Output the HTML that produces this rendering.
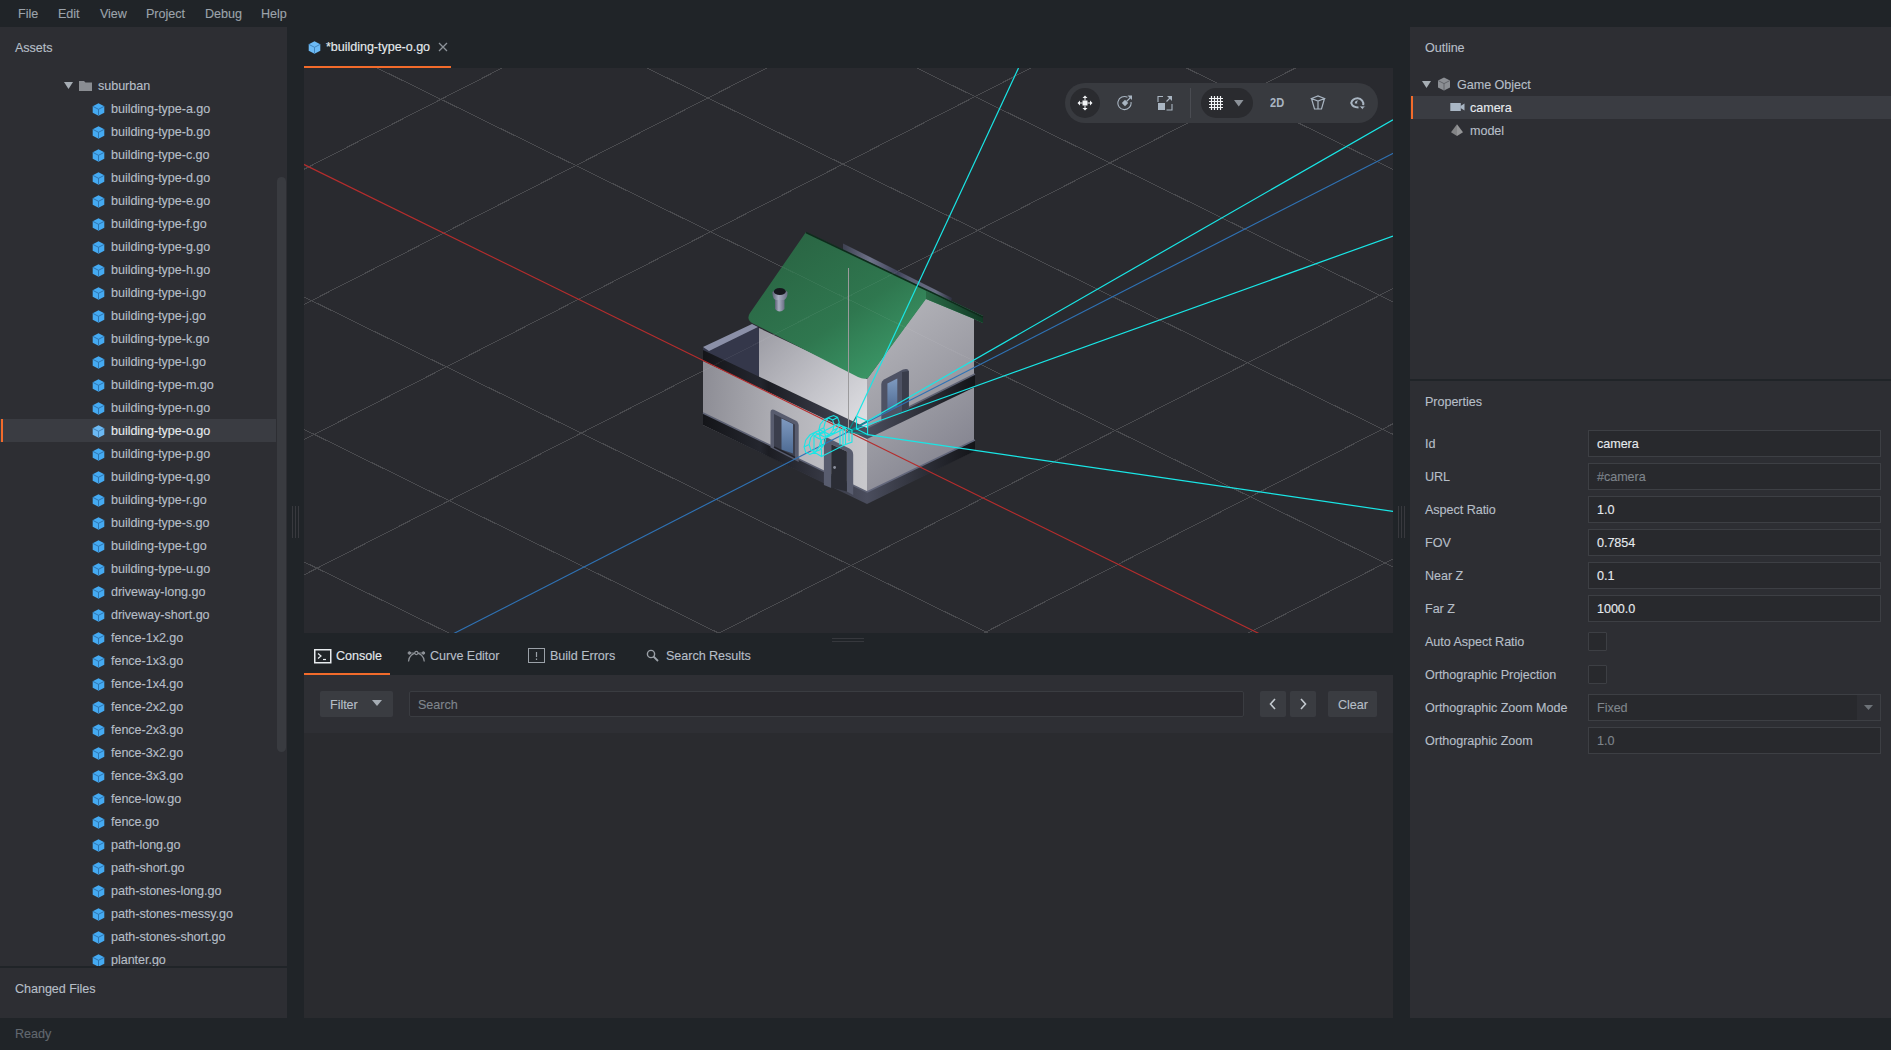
<!DOCTYPE html><html><head><meta charset="utf-8"><style>
*{box-sizing:border-box}
html,body{margin:0;padding:0;width:1891px;height:1050px;overflow:hidden;background:#202428;font-family:"Liberation Sans", sans-serif;font-size:12.6px;color:#b6bec7}
.a{position:absolute}
.t{position:absolute;white-space:nowrap;line-height:16px;letter-spacing:-0.05px;margin-top:1px;-webkit-text-stroke:0.12px currentColor}
</style></head><body>
<div class="t" style="left:18px;top:5px;color:#9ca3ab">File</div>
<div class="t" style="left:58px;top:5px;color:#9ca3ab">Edit</div>
<div class="t" style="left:100px;top:5px;color:#9ca3ab">View</div>
<div class="t" style="left:146px;top:5px;color:#9ca3ab">Project</div>
<div class="t" style="left:205px;top:5px;color:#9ca3ab">Debug</div>
<div class="t" style="left:261px;top:5px;color:#9ca3ab">Help</div>
<div class="a" style="left:0;top:27px;width:287px;height:939px;background:#2d2e33"></div>
<div class="a" style="left:0;top:968px;width:287px;height:50px;background:#2d2e33"></div>
<div class="t" style="left:15px;top:39px">Assets</div>
<svg class="a" style="left:64px;top:81.5px" width="10" height="8"><path d="M0 0 L9 0 L4.5 7Z" fill="#a6adb4"/></svg>
<svg class="a" style="left:79px;top:80px" width="14" height="12"><path d="M0 1 L5 1 L6.5 2.5 L13 2.5 L13 11 L0 11Z" fill="#8a8d92"/></svg>
<div class="t" style="left:98px;top:77px">suburban</div>
<div class="a" style="left:0;top:0;width:287px;height:966px;overflow:hidden">
<svg style="position:absolute;left:92px;top:103px" width="13" height="13" viewBox="0 0 13 13"><path d="M6.5 0.3 L12.3 3.3 L12.3 9.7 L6.5 12.7 L0.7 9.7 L0.7 3.3 Z" fill="#45aaf2"/><path d="M0.9 3.4 L6.5 6.3 L12.1 3.4 M6.5 6.3 L6.5 12.5" stroke="#2b6fa8" stroke-width="0.9" fill="none"/></svg>
<div class="t" style="left:111px;top:100px">building-type-a.go</div>
<svg style="position:absolute;left:92px;top:126px" width="13" height="13" viewBox="0 0 13 13"><path d="M6.5 0.3 L12.3 3.3 L12.3 9.7 L6.5 12.7 L0.7 9.7 L0.7 3.3 Z" fill="#45aaf2"/><path d="M0.9 3.4 L6.5 6.3 L12.1 3.4 M6.5 6.3 L6.5 12.5" stroke="#2b6fa8" stroke-width="0.9" fill="none"/></svg>
<div class="t" style="left:111px;top:123px">building-type-b.go</div>
<svg style="position:absolute;left:92px;top:149px" width="13" height="13" viewBox="0 0 13 13"><path d="M6.5 0.3 L12.3 3.3 L12.3 9.7 L6.5 12.7 L0.7 9.7 L0.7 3.3 Z" fill="#45aaf2"/><path d="M0.9 3.4 L6.5 6.3 L12.1 3.4 M6.5 6.3 L6.5 12.5" stroke="#2b6fa8" stroke-width="0.9" fill="none"/></svg>
<div class="t" style="left:111px;top:146px">building-type-c.go</div>
<svg style="position:absolute;left:92px;top:172px" width="13" height="13" viewBox="0 0 13 13"><path d="M6.5 0.3 L12.3 3.3 L12.3 9.7 L6.5 12.7 L0.7 9.7 L0.7 3.3 Z" fill="#45aaf2"/><path d="M0.9 3.4 L6.5 6.3 L12.1 3.4 M6.5 6.3 L6.5 12.5" stroke="#2b6fa8" stroke-width="0.9" fill="none"/></svg>
<div class="t" style="left:111px;top:169px">building-type-d.go</div>
<svg style="position:absolute;left:92px;top:195px" width="13" height="13" viewBox="0 0 13 13"><path d="M6.5 0.3 L12.3 3.3 L12.3 9.7 L6.5 12.7 L0.7 9.7 L0.7 3.3 Z" fill="#45aaf2"/><path d="M0.9 3.4 L6.5 6.3 L12.1 3.4 M6.5 6.3 L6.5 12.5" stroke="#2b6fa8" stroke-width="0.9" fill="none"/></svg>
<div class="t" style="left:111px;top:192px">building-type-e.go</div>
<svg style="position:absolute;left:92px;top:218px" width="13" height="13" viewBox="0 0 13 13"><path d="M6.5 0.3 L12.3 3.3 L12.3 9.7 L6.5 12.7 L0.7 9.7 L0.7 3.3 Z" fill="#45aaf2"/><path d="M0.9 3.4 L6.5 6.3 L12.1 3.4 M6.5 6.3 L6.5 12.5" stroke="#2b6fa8" stroke-width="0.9" fill="none"/></svg>
<div class="t" style="left:111px;top:215px">building-type-f.go</div>
<svg style="position:absolute;left:92px;top:241px" width="13" height="13" viewBox="0 0 13 13"><path d="M6.5 0.3 L12.3 3.3 L12.3 9.7 L6.5 12.7 L0.7 9.7 L0.7 3.3 Z" fill="#45aaf2"/><path d="M0.9 3.4 L6.5 6.3 L12.1 3.4 M6.5 6.3 L6.5 12.5" stroke="#2b6fa8" stroke-width="0.9" fill="none"/></svg>
<div class="t" style="left:111px;top:238px">building-type-g.go</div>
<svg style="position:absolute;left:92px;top:264px" width="13" height="13" viewBox="0 0 13 13"><path d="M6.5 0.3 L12.3 3.3 L12.3 9.7 L6.5 12.7 L0.7 9.7 L0.7 3.3 Z" fill="#45aaf2"/><path d="M0.9 3.4 L6.5 6.3 L12.1 3.4 M6.5 6.3 L6.5 12.5" stroke="#2b6fa8" stroke-width="0.9" fill="none"/></svg>
<div class="t" style="left:111px;top:261px">building-type-h.go</div>
<svg style="position:absolute;left:92px;top:287px" width="13" height="13" viewBox="0 0 13 13"><path d="M6.5 0.3 L12.3 3.3 L12.3 9.7 L6.5 12.7 L0.7 9.7 L0.7 3.3 Z" fill="#45aaf2"/><path d="M0.9 3.4 L6.5 6.3 L12.1 3.4 M6.5 6.3 L6.5 12.5" stroke="#2b6fa8" stroke-width="0.9" fill="none"/></svg>
<div class="t" style="left:111px;top:284px">building-type-i.go</div>
<svg style="position:absolute;left:92px;top:310px" width="13" height="13" viewBox="0 0 13 13"><path d="M6.5 0.3 L12.3 3.3 L12.3 9.7 L6.5 12.7 L0.7 9.7 L0.7 3.3 Z" fill="#45aaf2"/><path d="M0.9 3.4 L6.5 6.3 L12.1 3.4 M6.5 6.3 L6.5 12.5" stroke="#2b6fa8" stroke-width="0.9" fill="none"/></svg>
<div class="t" style="left:111px;top:307px">building-type-j.go</div>
<svg style="position:absolute;left:92px;top:333px" width="13" height="13" viewBox="0 0 13 13"><path d="M6.5 0.3 L12.3 3.3 L12.3 9.7 L6.5 12.7 L0.7 9.7 L0.7 3.3 Z" fill="#45aaf2"/><path d="M0.9 3.4 L6.5 6.3 L12.1 3.4 M6.5 6.3 L6.5 12.5" stroke="#2b6fa8" stroke-width="0.9" fill="none"/></svg>
<div class="t" style="left:111px;top:330px">building-type-k.go</div>
<svg style="position:absolute;left:92px;top:356px" width="13" height="13" viewBox="0 0 13 13"><path d="M6.5 0.3 L12.3 3.3 L12.3 9.7 L6.5 12.7 L0.7 9.7 L0.7 3.3 Z" fill="#45aaf2"/><path d="M0.9 3.4 L6.5 6.3 L12.1 3.4 M6.5 6.3 L6.5 12.5" stroke="#2b6fa8" stroke-width="0.9" fill="none"/></svg>
<div class="t" style="left:111px;top:353px">building-type-l.go</div>
<svg style="position:absolute;left:92px;top:379px" width="13" height="13" viewBox="0 0 13 13"><path d="M6.5 0.3 L12.3 3.3 L12.3 9.7 L6.5 12.7 L0.7 9.7 L0.7 3.3 Z" fill="#45aaf2"/><path d="M0.9 3.4 L6.5 6.3 L12.1 3.4 M6.5 6.3 L6.5 12.5" stroke="#2b6fa8" stroke-width="0.9" fill="none"/></svg>
<div class="t" style="left:111px;top:376px">building-type-m.go</div>
<svg style="position:absolute;left:92px;top:402px" width="13" height="13" viewBox="0 0 13 13"><path d="M6.5 0.3 L12.3 3.3 L12.3 9.7 L6.5 12.7 L0.7 9.7 L0.7 3.3 Z" fill="#45aaf2"/><path d="M0.9 3.4 L6.5 6.3 L12.1 3.4 M6.5 6.3 L6.5 12.5" stroke="#2b6fa8" stroke-width="0.9" fill="none"/></svg>
<div class="t" style="left:111px;top:399px">building-type-n.go</div>
<div class="a" style="left:0;top:419px;width:276px;height:23px;background:#3a3c42"></div>
<div class="a" style="left:1px;top:419px;width:2px;height:23px;background:#f26b2b"></div>
<svg style="position:absolute;left:92px;top:425px" width="13" height="13" viewBox="0 0 13 13"><path d="M6.5 0.3 L12.3 3.3 L12.3 9.7 L6.5 12.7 L0.7 9.7 L0.7 3.3 Z" fill="#6cbaf5"/><path d="M0.9 3.4 L6.5 6.3 L12.1 3.4 M6.5 6.3 L6.5 12.5" stroke="#3d80b8" stroke-width="0.9" fill="none"/></svg>
<div class="t" style="left:111px;top:422px;color:#e6eaee">building-type-o.go</div>
<svg style="position:absolute;left:92px;top:448px" width="13" height="13" viewBox="0 0 13 13"><path d="M6.5 0.3 L12.3 3.3 L12.3 9.7 L6.5 12.7 L0.7 9.7 L0.7 3.3 Z" fill="#45aaf2"/><path d="M0.9 3.4 L6.5 6.3 L12.1 3.4 M6.5 6.3 L6.5 12.5" stroke="#2b6fa8" stroke-width="0.9" fill="none"/></svg>
<div class="t" style="left:111px;top:445px">building-type-p.go</div>
<svg style="position:absolute;left:92px;top:471px" width="13" height="13" viewBox="0 0 13 13"><path d="M6.5 0.3 L12.3 3.3 L12.3 9.7 L6.5 12.7 L0.7 9.7 L0.7 3.3 Z" fill="#45aaf2"/><path d="M0.9 3.4 L6.5 6.3 L12.1 3.4 M6.5 6.3 L6.5 12.5" stroke="#2b6fa8" stroke-width="0.9" fill="none"/></svg>
<div class="t" style="left:111px;top:468px">building-type-q.go</div>
<svg style="position:absolute;left:92px;top:494px" width="13" height="13" viewBox="0 0 13 13"><path d="M6.5 0.3 L12.3 3.3 L12.3 9.7 L6.5 12.7 L0.7 9.7 L0.7 3.3 Z" fill="#45aaf2"/><path d="M0.9 3.4 L6.5 6.3 L12.1 3.4 M6.5 6.3 L6.5 12.5" stroke="#2b6fa8" stroke-width="0.9" fill="none"/></svg>
<div class="t" style="left:111px;top:491px">building-type-r.go</div>
<svg style="position:absolute;left:92px;top:517px" width="13" height="13" viewBox="0 0 13 13"><path d="M6.5 0.3 L12.3 3.3 L12.3 9.7 L6.5 12.7 L0.7 9.7 L0.7 3.3 Z" fill="#45aaf2"/><path d="M0.9 3.4 L6.5 6.3 L12.1 3.4 M6.5 6.3 L6.5 12.5" stroke="#2b6fa8" stroke-width="0.9" fill="none"/></svg>
<div class="t" style="left:111px;top:514px">building-type-s.go</div>
<svg style="position:absolute;left:92px;top:540px" width="13" height="13" viewBox="0 0 13 13"><path d="M6.5 0.3 L12.3 3.3 L12.3 9.7 L6.5 12.7 L0.7 9.7 L0.7 3.3 Z" fill="#45aaf2"/><path d="M0.9 3.4 L6.5 6.3 L12.1 3.4 M6.5 6.3 L6.5 12.5" stroke="#2b6fa8" stroke-width="0.9" fill="none"/></svg>
<div class="t" style="left:111px;top:537px">building-type-t.go</div>
<svg style="position:absolute;left:92px;top:563px" width="13" height="13" viewBox="0 0 13 13"><path d="M6.5 0.3 L12.3 3.3 L12.3 9.7 L6.5 12.7 L0.7 9.7 L0.7 3.3 Z" fill="#45aaf2"/><path d="M0.9 3.4 L6.5 6.3 L12.1 3.4 M6.5 6.3 L6.5 12.5" stroke="#2b6fa8" stroke-width="0.9" fill="none"/></svg>
<div class="t" style="left:111px;top:560px">building-type-u.go</div>
<svg style="position:absolute;left:92px;top:586px" width="13" height="13" viewBox="0 0 13 13"><path d="M6.5 0.3 L12.3 3.3 L12.3 9.7 L6.5 12.7 L0.7 9.7 L0.7 3.3 Z" fill="#45aaf2"/><path d="M0.9 3.4 L6.5 6.3 L12.1 3.4 M6.5 6.3 L6.5 12.5" stroke="#2b6fa8" stroke-width="0.9" fill="none"/></svg>
<div class="t" style="left:111px;top:583px">driveway-long.go</div>
<svg style="position:absolute;left:92px;top:609px" width="13" height="13" viewBox="0 0 13 13"><path d="M6.5 0.3 L12.3 3.3 L12.3 9.7 L6.5 12.7 L0.7 9.7 L0.7 3.3 Z" fill="#45aaf2"/><path d="M0.9 3.4 L6.5 6.3 L12.1 3.4 M6.5 6.3 L6.5 12.5" stroke="#2b6fa8" stroke-width="0.9" fill="none"/></svg>
<div class="t" style="left:111px;top:606px">driveway-short.go</div>
<svg style="position:absolute;left:92px;top:632px" width="13" height="13" viewBox="0 0 13 13"><path d="M6.5 0.3 L12.3 3.3 L12.3 9.7 L6.5 12.7 L0.7 9.7 L0.7 3.3 Z" fill="#45aaf2"/><path d="M0.9 3.4 L6.5 6.3 L12.1 3.4 M6.5 6.3 L6.5 12.5" stroke="#2b6fa8" stroke-width="0.9" fill="none"/></svg>
<div class="t" style="left:111px;top:629px">fence-1x2.go</div>
<svg style="position:absolute;left:92px;top:655px" width="13" height="13" viewBox="0 0 13 13"><path d="M6.5 0.3 L12.3 3.3 L12.3 9.7 L6.5 12.7 L0.7 9.7 L0.7 3.3 Z" fill="#45aaf2"/><path d="M0.9 3.4 L6.5 6.3 L12.1 3.4 M6.5 6.3 L6.5 12.5" stroke="#2b6fa8" stroke-width="0.9" fill="none"/></svg>
<div class="t" style="left:111px;top:652px">fence-1x3.go</div>
<svg style="position:absolute;left:92px;top:678px" width="13" height="13" viewBox="0 0 13 13"><path d="M6.5 0.3 L12.3 3.3 L12.3 9.7 L6.5 12.7 L0.7 9.7 L0.7 3.3 Z" fill="#45aaf2"/><path d="M0.9 3.4 L6.5 6.3 L12.1 3.4 M6.5 6.3 L6.5 12.5" stroke="#2b6fa8" stroke-width="0.9" fill="none"/></svg>
<div class="t" style="left:111px;top:675px">fence-1x4.go</div>
<svg style="position:absolute;left:92px;top:701px" width="13" height="13" viewBox="0 0 13 13"><path d="M6.5 0.3 L12.3 3.3 L12.3 9.7 L6.5 12.7 L0.7 9.7 L0.7 3.3 Z" fill="#45aaf2"/><path d="M0.9 3.4 L6.5 6.3 L12.1 3.4 M6.5 6.3 L6.5 12.5" stroke="#2b6fa8" stroke-width="0.9" fill="none"/></svg>
<div class="t" style="left:111px;top:698px">fence-2x2.go</div>
<svg style="position:absolute;left:92px;top:724px" width="13" height="13" viewBox="0 0 13 13"><path d="M6.5 0.3 L12.3 3.3 L12.3 9.7 L6.5 12.7 L0.7 9.7 L0.7 3.3 Z" fill="#45aaf2"/><path d="M0.9 3.4 L6.5 6.3 L12.1 3.4 M6.5 6.3 L6.5 12.5" stroke="#2b6fa8" stroke-width="0.9" fill="none"/></svg>
<div class="t" style="left:111px;top:721px">fence-2x3.go</div>
<svg style="position:absolute;left:92px;top:747px" width="13" height="13" viewBox="0 0 13 13"><path d="M6.5 0.3 L12.3 3.3 L12.3 9.7 L6.5 12.7 L0.7 9.7 L0.7 3.3 Z" fill="#45aaf2"/><path d="M0.9 3.4 L6.5 6.3 L12.1 3.4 M6.5 6.3 L6.5 12.5" stroke="#2b6fa8" stroke-width="0.9" fill="none"/></svg>
<div class="t" style="left:111px;top:744px">fence-3x2.go</div>
<svg style="position:absolute;left:92px;top:770px" width="13" height="13" viewBox="0 0 13 13"><path d="M6.5 0.3 L12.3 3.3 L12.3 9.7 L6.5 12.7 L0.7 9.7 L0.7 3.3 Z" fill="#45aaf2"/><path d="M0.9 3.4 L6.5 6.3 L12.1 3.4 M6.5 6.3 L6.5 12.5" stroke="#2b6fa8" stroke-width="0.9" fill="none"/></svg>
<div class="t" style="left:111px;top:767px">fence-3x3.go</div>
<svg style="position:absolute;left:92px;top:793px" width="13" height="13" viewBox="0 0 13 13"><path d="M6.5 0.3 L12.3 3.3 L12.3 9.7 L6.5 12.7 L0.7 9.7 L0.7 3.3 Z" fill="#45aaf2"/><path d="M0.9 3.4 L6.5 6.3 L12.1 3.4 M6.5 6.3 L6.5 12.5" stroke="#2b6fa8" stroke-width="0.9" fill="none"/></svg>
<div class="t" style="left:111px;top:790px">fence-low.go</div>
<svg style="position:absolute;left:92px;top:816px" width="13" height="13" viewBox="0 0 13 13"><path d="M6.5 0.3 L12.3 3.3 L12.3 9.7 L6.5 12.7 L0.7 9.7 L0.7 3.3 Z" fill="#45aaf2"/><path d="M0.9 3.4 L6.5 6.3 L12.1 3.4 M6.5 6.3 L6.5 12.5" stroke="#2b6fa8" stroke-width="0.9" fill="none"/></svg>
<div class="t" style="left:111px;top:813px">fence.go</div>
<svg style="position:absolute;left:92px;top:839px" width="13" height="13" viewBox="0 0 13 13"><path d="M6.5 0.3 L12.3 3.3 L12.3 9.7 L6.5 12.7 L0.7 9.7 L0.7 3.3 Z" fill="#45aaf2"/><path d="M0.9 3.4 L6.5 6.3 L12.1 3.4 M6.5 6.3 L6.5 12.5" stroke="#2b6fa8" stroke-width="0.9" fill="none"/></svg>
<div class="t" style="left:111px;top:836px">path-long.go</div>
<svg style="position:absolute;left:92px;top:862px" width="13" height="13" viewBox="0 0 13 13"><path d="M6.5 0.3 L12.3 3.3 L12.3 9.7 L6.5 12.7 L0.7 9.7 L0.7 3.3 Z" fill="#45aaf2"/><path d="M0.9 3.4 L6.5 6.3 L12.1 3.4 M6.5 6.3 L6.5 12.5" stroke="#2b6fa8" stroke-width="0.9" fill="none"/></svg>
<div class="t" style="left:111px;top:859px">path-short.go</div>
<svg style="position:absolute;left:92px;top:885px" width="13" height="13" viewBox="0 0 13 13"><path d="M6.5 0.3 L12.3 3.3 L12.3 9.7 L6.5 12.7 L0.7 9.7 L0.7 3.3 Z" fill="#45aaf2"/><path d="M0.9 3.4 L6.5 6.3 L12.1 3.4 M6.5 6.3 L6.5 12.5" stroke="#2b6fa8" stroke-width="0.9" fill="none"/></svg>
<div class="t" style="left:111px;top:882px">path-stones-long.go</div>
<svg style="position:absolute;left:92px;top:908px" width="13" height="13" viewBox="0 0 13 13"><path d="M6.5 0.3 L12.3 3.3 L12.3 9.7 L6.5 12.7 L0.7 9.7 L0.7 3.3 Z" fill="#45aaf2"/><path d="M0.9 3.4 L6.5 6.3 L12.1 3.4 M6.5 6.3 L6.5 12.5" stroke="#2b6fa8" stroke-width="0.9" fill="none"/></svg>
<div class="t" style="left:111px;top:905px">path-stones-messy.go</div>
<svg style="position:absolute;left:92px;top:931px" width="13" height="13" viewBox="0 0 13 13"><path d="M6.5 0.3 L12.3 3.3 L12.3 9.7 L6.5 12.7 L0.7 9.7 L0.7 3.3 Z" fill="#45aaf2"/><path d="M0.9 3.4 L6.5 6.3 L12.1 3.4 M6.5 6.3 L6.5 12.5" stroke="#2b6fa8" stroke-width="0.9" fill="none"/></svg>
<div class="t" style="left:111px;top:928px">path-stones-short.go</div>
<svg style="position:absolute;left:92px;top:954px" width="13" height="13" viewBox="0 0 13 13"><path d="M6.5 0.3 L12.3 3.3 L12.3 9.7 L6.5 12.7 L0.7 9.7 L0.7 3.3 Z" fill="#45aaf2"/><path d="M0.9 3.4 L6.5 6.3 L12.1 3.4 M6.5 6.3 L6.5 12.5" stroke="#2b6fa8" stroke-width="0.9" fill="none"/></svg>
<div class="t" style="left:111px;top:951px">planter.go</div>
</div>
<div class="a" style="left:277px;top:177px;width:9px;height:575px;border-radius:4.5px;background:#393b40"></div>
<div class="t" style="left:15px;top:980px">Changed Files</div>
<div class="t" style="left:15px;top:1025px;color:#62686f">Ready</div>
<div class="a" style="left:292px;top:506px;width:1px;height:32px;background:#38393e"></div>
<div class="a" style="left:295px;top:506px;width:1px;height:32px;background:#38393e"></div>
<div class="a" style="left:298px;top:506px;width:1px;height:32px;background:#38393e"></div>
<div class="a" style="left:1398px;top:506px;width:1px;height:32px;background:#38393e"></div>
<div class="a" style="left:1401px;top:506px;width:1px;height:32px;background:#38393e"></div>
<div class="a" style="left:1404px;top:506px;width:1px;height:32px;background:#38393e"></div>
<svg style="position:absolute;left:308px;top:41px" width="13" height="13" viewBox="0 0 13 13"><path d="M6.5 0.3 L12.3 3.3 L12.3 9.7 L6.5 12.7 L0.7 9.7 L0.7 3.3 Z" fill="#6cbaf5"/><path d="M0.9 3.4 L6.5 6.3 L12.1 3.4 M6.5 6.3 L6.5 12.5" stroke="#3d80b8" stroke-width="0.9" fill="none"/></svg>
<div class="t" style="left:326px;top:38px;color:#e6eaee">*building-type-o.go</div>
<svg class="a" style="left:438px;top:42px" width="10" height="10"><path d="M1 1 L9 9 M9 1 L1 9" stroke="#8d939a" stroke-width="1.3"/></svg>
<div class="a" style="left:304px;top:66px;width:147px;height:2px;background:#f26b2b"></div>
<div class="a" style="left:304px;top:68px;width:1089px;height:565px;background:#292a2f;overflow:hidden">
<svg width="1089" height="565" viewBox="304 68 1089 565" style="position:absolute;left:0;top:0"><path d="M-2354.9 447.6L815.6 -1172.8M-2354.9 447.6L881.0 2038.9M-2220.2 513.9L950.4 -1106.7M-2222.7 380.1L1013.3 1971.2M-2085.5 580.1L1085.2 -1040.6M-2090.6 312.6L1145.5 1903.6M-1950.8 646.3L1220.0 -974.4M-1958.5 245.0L1277.8 1835.9M-1816.1 712.6L1354.8 -908.3M-1826.3 177.5L1410.0 1768.3M-1681.4 778.8L1489.7 -842.2M-1694.2 110.0L1542.3 1700.7M-1546.6 845.1L1624.5 -776.0M-1562.1 42.4L1674.5 1633.0M-1411.9 911.3L1759.4 -709.8M-1430.0 -25.1L1806.8 1565.4M-1277.1 977.6L1894.3 -643.7M-1297.8 -92.6L1939.0 1497.8M-1142.3 1043.9L2029.2 -577.5M-1165.7 -160.2L2071.2 1430.1M-1007.5 1110.2L2164.1 -511.3M-1033.6 -227.7L2203.5 1362.5M-872.7 1176.5L2299.0 -445.1M-901.5 -295.2L2335.7 1294.9M-603.1 1309.1L2568.9 -312.7M-637.3 -430.2L2600.2 1159.7M-468.2 1375.4L2703.9 -246.5M-505.2 -497.8L2732.4 1092.0M-333.4 1441.7L2838.9 -180.3M-373.1 -565.3L2864.6 1024.4M-198.5 1508.0L2973.9 -114.1M-241.0 -632.8L2996.8 956.8M-63.6 1574.3L3108.9 -47.8M-108.9 -700.3L3129.0 889.2M71.3 1640.7L3243.9 18.4M23.1 -767.8L3261.2 821.6M206.2 1707.0L3379.0 84.6M155.2 -835.3L3393.4 754.0M341.2 1773.4L3514.0 150.9M287.3 -902.8L3525.6 686.4M476.1 1839.7L3649.1 217.1M419.4 -970.3L3657.8 618.8M611.1 1906.1L3784.2 283.4M551.4 -1037.8L3790.0 551.1M746.0 1972.5L3919.3 349.7M683.5 -1105.3L3922.2 483.5M881.0 2038.9L4054.4 415.9M815.6 -1172.8L4054.4 415.9" stroke="#ffffff" stroke-opacity="0.11" stroke-width="1" fill="none" shape-rendering="crispEdges"/><defs>
<linearGradient id="gRoof" x1="806" y1="233" x2="900" y2="370" gradientUnits="userSpaceOnUse"><stop offset="0" stop-color="#2a6644"/><stop offset="0.55" stop-color="#2f774f"/><stop offset="1" stop-color="#3c9a69"/></linearGradient>
<linearGradient id="gLeftG" x1="703" y1="420" x2="867" y2="430" gradientUnits="userSpaceOnUse"><stop offset="0" stop-color="#8e8e96"/><stop offset="0.5" stop-color="#b2b2b8"/><stop offset="1" stop-color="#c8c8cc"/></linearGradient>
<linearGradient id="gLeftU" x1="760" y1="330" x2="860" y2="425" gradientUnits="userSpaceOnUse"><stop offset="0" stop-color="#9c9ca4"/><stop offset="0.6" stop-color="#c4c4ca"/><stop offset="1" stop-color="#dedee2"/></linearGradient>
<linearGradient id="gRight" x1="870" y1="330" x2="975" y2="460" gradientUnits="userSpaceOnUse"><stop offset="0" stop-color="#b2b2b8"/><stop offset="0.5" stop-color="#9c9ca4"/><stop offset="1" stop-color="#82828e"/></linearGradient>
<linearGradient id="gBand" x1="703" y1="0" x2="975" y2="0" gradientUnits="userSpaceOnUse"><stop offset="0" stop-color="#17181d"/><stop offset="0.3" stop-color="#2a2c35"/><stop offset="0.6" stop-color="#41445280"/><stop offset="1" stop-color="#1c1d24"/></linearGradient>
<linearGradient id="gGlass" x1="0" y1="0" x2="0" y2="1"><stop offset="0" stop-color="#7f9ac0"/><stop offset="1" stop-color="#4d6a92"/></linearGradient>
</defs><polygon points="703,351 867,429 867,503 703,425" fill="url(#gLeftG)"/><polygon points="703,348 752,325 759,328 759,378 703,351" fill="#34374a"/><polygon points="703,347 752,324 758,327 709,351" fill="#8b90a8"/><polygon points="759,328 867,379 867,430 759,378" fill="url(#gLeftU)"/><polygon points="867,379 926,298 974,318 974,451 867,503" fill="url(#gRight)"/><linearGradient id="gBandL" x1="703" y1="0" x2="867" y2="0" gradientUnits="userSpaceOnUse"><stop offset="0" stop-color="#141519"/><stop offset="0.35" stop-color="#24262e"/><stop offset="0.4" stop-color="#1c1d23"/><stop offset="1" stop-color="#4a4d5d"/></linearGradient><linearGradient id="gBandR" x1="867" y1="0" x2="975" y2="0" gradientUnits="userSpaceOnUse"><stop offset="0" stop-color="#4a4d5d"/><stop offset="0.5" stop-color="#2e3039"/><stop offset="1" stop-color="#131418"/></linearGradient><polygon points="703,350 867,428 867,439 703,361" fill="url(#gBandL)"/><polygon points="867,428 975,374 975,387 867,439" fill="url(#gBandR)"/><polyline points="867,428 975,374" stroke="#5e6274" stroke-width="1.5" fill="none"/><polygon points="703,413 867,492 867,504 703,425" fill="url(#gBandL)"/><polyline points="703,413 867,492" stroke="#5e6274" stroke-width="1.5" fill="none"/><polygon points="867,492 975,440 975,451 867,504" fill="url(#gBandR)"/><polyline points="867,492 975,440" stroke="#62667a" stroke-width="1.5" fill="none"/><path d="M770.5,447.4 L770.5,412 Q770.5,408.5 774,409.8 L795,420.3 Q798.7,422.3 798.7,425.5 L798.7,462 Z" fill="#585c6e"/><path d="M774,446.5 L774,414 L795,424.5 L795,458 Z" fill="#3b3e4c"/><path d="M781.5,449.5 L781.5,418.6 L793,424 L793,453.6 Z" fill="url(#gGlass)"/><path d="M774,447 L795,457.5" stroke="#22232a" stroke-width="1.5"/><path d="M823.9,485 L823.9,440.5 Q824,436.5 828,438 L849.5,448.5 Q853.2,450.5 853.2,454.5 L853.2,495 L846.9,491.5 L846.9,451.5 L831.2,444.2 L831.2,488 Z" fill="#585c6e"/><path d="M831.2,444.2 L846.9,451.5 L846.9,491.5 L831.2,487.5 Z" fill="#2b2d35"/><circle cx="834.6" cy="467.5" r="1.4" fill="#8c909e"/><path d="M881.3,421.8 L881.3,384 Q881.3,381 884,379.5 L903,369.5 Q908.8,367.5 908.8,372 L908.8,408 Z" fill="#4e5264"/><path d="M902,372 L908.8,371 L908.8,408 L902,411.5 Z" fill="#3a3d4b"/><path d="M887.4,411 L887.4,383.5 L897.3,378.5 L897.3,406.2 Z" fill="url(#gGlass)"/><linearGradient id="gStrip" x1="843" y1="0" x2="952" y2="0" gradientUnits="userSpaceOnUse"><stop offset="0" stop-color="#3e4152"/><stop offset="0.25" stop-color="#6e7288"/><stop offset="0.5" stop-color="#40435a"/><stop offset="0.62" stop-color="#5a5e74"/><stop offset="0.85" stop-color="#6a6e84"/><stop offset="1" stop-color="#2e3040"/></linearGradient><polygon points="843,243.5 952,298 951,302 843,251" fill="url(#gStrip)"/><path d="M806,232 L983,316 L983,323 L973,318.5 L926,299 L868,378 Q864,380 858,377 L752,323 Q746,319 750,313 Z" fill="url(#gRoof)"/><linearGradient id="gOver" x1="926" y1="0" x2="983" y2="0" gradientUnits="userSpaceOnUse"><stop offset="0" stop-color="#2a6a46"/><stop offset="1" stop-color="#123a26"/></linearGradient><polygon points="926,291 983,317 983,323 973,318.5 926,299" fill="url(#gOver)"/><polyline points="806,232.5 983,317" stroke="#0f2a1c" stroke-width="1.6" fill="none"/><linearGradient id="gChim" x1="0" y1="0" x2="1" y2="0"><stop offset="0" stop-color="#5d6276"/><stop offset="0.4" stop-color="#a8adc0"/><stop offset="1" stop-color="#6a6f84"/></linearGradient><path d="M775,298 L775,309 Q779.5,314 784.5,309 L784.5,298 Z" fill="url(#gChim)"/><path d="M772.3,292 Q772.5,299 776,300 L784,300 Q787.8,298 787.5,292 Q780,285 772.3,292Z" fill="url(#gChim)"/><ellipse cx="779.8" cy="291.5" rx="6" ry="3.6" fill="#16171d"/><path d="M-2354.9 447.6L815.6 -1172.8M-2354.9 447.6L881.0 2038.9M-2220.2 513.9L950.4 -1106.7M-2222.7 380.1L1013.3 1971.2M-2085.5 580.1L1085.2 -1040.6M-2090.6 312.6L1145.5 1903.6M-1950.8 646.3L1220.0 -974.4M-1958.5 245.0L1277.8 1835.9M-1816.1 712.6L1354.8 -908.3M-1826.3 177.5L1410.0 1768.3M-1681.4 778.8L1489.7 -842.2M-1694.2 110.0L1542.3 1700.7M-1546.6 845.1L1624.5 -776.0M-1562.1 42.4L1674.5 1633.0M-1411.9 911.3L1759.4 -709.8M-1430.0 -25.1L1806.8 1565.4M-1277.1 977.6L1894.3 -643.7M-1297.8 -92.6L1939.0 1497.8M-1142.3 1043.9L2029.2 -577.5M-1165.7 -160.2L2071.2 1430.1M-1007.5 1110.2L2164.1 -511.3M-1033.6 -227.7L2203.5 1362.5M-872.7 1176.5L2299.0 -445.1M-901.5 -295.2L2335.7 1294.9M-603.1 1309.1L2568.9 -312.7M-637.3 -430.2L2600.2 1159.7M-468.2 1375.4L2703.9 -246.5M-505.2 -497.8L2732.4 1092.0M-333.4 1441.7L2838.9 -180.3M-373.1 -565.3L2864.6 1024.4M-198.5 1508.0L2973.9 -114.1M-241.0 -632.8L2996.8 956.8M-63.6 1574.3L3108.9 -47.8M-108.9 -700.3L3129.0 889.2M71.3 1640.7L3243.9 18.4M23.1 -767.8L3261.2 821.6M206.2 1707.0L3379.0 84.6M155.2 -835.3L3393.4 754.0M341.2 1773.4L3514.0 150.9M287.3 -902.8L3525.6 686.4M476.1 1839.7L3649.1 217.1M419.4 -970.3L3657.8 618.8M611.1 1906.1L3784.2 283.4M551.4 -1037.8L3790.0 551.1M746.0 1972.5L3919.3 349.7M683.5 -1105.3L3922.2 483.5M881.0 2038.9L4054.4 415.9M815.6 -1172.8L4054.4 415.9" stroke="#ffffff" stroke-opacity="0.05" stroke-width="1" fill="none" shape-rendering="crispEdges"/><line x1="-769.4" y1="-362.7" x2="2467.9" y2="1227.3" stroke="#b52d2d" stroke-width="1.15"/><line x1="-737.9" y1="1242.8" x2="2434.0" y2="-378.9" stroke="#2f72b4" stroke-width="1.15"/><line x1="848.5" y1="268" x2="848.5" y2="432" stroke="#9a9a9c" stroke-width="1" shape-rendering="crispEdges"/><line x1="848" y1="431.6" x2="856.5" y2="416.2" stroke="#0a8a8a" stroke-width="1.2"/><line x1="848" y1="431.6" x2="867.6" y2="420.9" stroke="#0a8a8a" stroke-width="1.2"/><line x1="848" y1="431.6" x2="867.6" y2="434.6" stroke="#0a8a8a" stroke-width="1.2"/><line x1="848" y1="431.6" x2="856.5" y2="429" stroke="#0a8a8a" stroke-width="1.2"/><line x1="856.5" y1="416.2" x2="1018.5" y2="68" stroke="#19e6e6" stroke-width="1.2"/><line x1="867.6" y1="420.9" x2="1393" y2="119.8" stroke="#19e6e6" stroke-width="1.2"/><line x1="867.6" y1="434.6" x2="1393" y2="511.4" stroke="#19e6e6" stroke-width="1.2"/><line x1="856.5" y1="429" x2="1393" y2="236" stroke="#19e6e6" stroke-width="1.2"/><polygon points="856.5,416.2 867.6,420.9 867.6,434.6 856.5,429" fill="none" stroke="#19e6e6" stroke-width="1.1"/><path d="M819.3,446.8 L815.0,452.2 L809.8,454.4 L805.7,452.3 L804.1,446.9 L805.7,440.2 L810.0,434.8 L815.2,432.6 L819.3,434.7 L820.9,440.1 Z M824.3,444.3 L820.0,449.7 L814.8,451.9 L810.7,449.8 L809.1,444.4 L810.7,437.7 L815.0,432.3 L820.2,430.1 L824.3,432.2 L825.9,437.6 Z M819.3,446.8 L824.3,444.3 M809.8,454.4 L814.8,451.9 M804.1,446.9 L809.1,444.4 M810.0,434.8 L815.0,432.3 M819.3,434.7 L824.3,432.2 M832.8,430.5 L829.0,435.3 L824.3,437.0 L820.4,435.1 L818.8,430.3 L820.2,424.5 L824.0,419.7 L828.7,418.0 L832.6,419.9 L834.2,424.7 Z M837.8,428.0 L834.0,432.8 L829.3,434.5 L825.4,432.6 L823.8,427.8 L825.2,422.0 L829.0,417.2 L833.7,415.5 L837.6,417.4 L839.2,422.2 Z M832.8,430.5 L837.8,428.0 M824.3,437.0 L829.3,434.5 M818.8,430.3 L823.8,427.8 M824.0,419.7 L829.0,417.2 M832.6,419.9 L837.6,417.4 M821.5,456.5 L845.5,444.5 L845.5,428.0 L821.5,440.0 Z M814.0,436.0 L838.0,424.0 L845.5,428.0 M821.5,440.0 L814.0,436.0 L814.0,452.0 L821.5,456.5 M838.0,424.0 L852.0,430.0 L852.0,442.0 L845.5,444.5 M840.0,428.0 L840.0,445.0 M843.0,426.0 L843.0,446.0 M849.0,431.0 L849.0,441.0" fill="none" stroke="#19e6e6" stroke-width="1.1"/></svg>
</div>
<div class="a" style="left:1065px;top:83px;width:313px;height:40px;border-radius:20px;background:#383a3f"></div>
<div class="a" style="left:1070px;top:88px;width:30px;height:30px;border-radius:15px;background:#2a2b2f"></div>
<div class="a" style="left:1190px;top:88px;width:1px;height:30px;background:#4a4c52"></div>
<div class="a" style="left:1201px;top:88px;width:52px;height:30px;border-radius:15px;background:#2a2b2f"></div>
<svg class="a" style="left:1077px;top:95px" width="16" height="16" viewBox="0 0 16 16" fill="#f2f4f6"><rect x="5.5" y="5.5" width="5" height="5"/><path d="M8 0.5 L10.5 3 L5.5 3Z M8 15.5 L10.5 13 L5.5 13Z M0.5 8 L3 5.5 L3 10.5Z M15.5 8 L13 5.5 L13 10.5Z"/><path d="M7.5 3 h1 v2.5 h-1z M7.5 10.5 h1 v2.5 h-1z M3 7.5 v1 h2.5 v-1z M10.5 7.5 v1 h2.5 v-1z"/></svg>
<svg class="a" style="left:1117px;top:95px" width="16" height="16" viewBox="0 0 16 16"><path d="M10.5 2.2 A6.6 6.6 0 1 0 14 7" fill="none" stroke="#a9b5c2" stroke-width="1.1"/><path d="M8 4.8 L11.2 8 L8 11.2 L4.8 8Z" fill="#a9b5c2"/><path d="M10.5 0.5 L15 0.5 L15 5 Z" fill="#a9b5c2"/><path d="M9.5 6.5 L13.5 2.5" stroke="#a9b5c2" stroke-width="1.1"/></svg>
<svg class="a" style="left:1157px;top:95px" width="16" height="16" viewBox="0 0 16 16"><rect x="1" y="8" width="7" height="7" fill="#a9b5c2"/><path d="M1 7 V1.5 H6 M15 9 V15 H9.5" fill="none" stroke="#a9b5c2" stroke-width="1.1"/><path d="M10 1 L15 1 L15 6Z" fill="#a9b5c2"/><path d="M9.5 6.5 L13.5 2.5" stroke="#a9b5c2" stroke-width="1.1"/></svg>
<svg class="a" style="left:1208px;top:95px" width="16" height="16" viewBox="0 0 16 16" stroke="#f2f4f6" stroke-width="1.2"><path d="M3.5 1 V15 M6.5 1 V15 M9.5 1 V15 M12.5 1 V15 M1 3.5 H15 M1 6.5 H15 M1 9.5 H15 M1 12.5 H15"/></svg>
<svg class="a" style="left:1234px;top:100px" width="10" height="7"><path d="M0 0 L9.5 0 L4.75 6.5Z" fill="#8c9299"/></svg>
<div class="a" style="left:1270px;top:96px;font:bold 13px/14px Liberation Sans;color:#a9b5c2;transform:scaleX(0.85);transform-origin:0 0">2D</div>
<svg class="a" style="left:1310px;top:95px" width="16" height="16" viewBox="0 0 16 16" fill="none" stroke="#a9b5c2" stroke-width="1.2"><path d="M1.5 3.5 L8 1 L14.5 3.5 L8 6 Z M1.5 3.5 L4.5 14 L11.5 14 L14.5 3.5 M8 6 L8 14"/></svg>
<svg class="a" style="left:1350px;top:96px" width="17" height="15" viewBox="0 0 17 15"><path d="M13.2 9.2 C14 6.5 11.5 2.2 7.5 2.3 C4 2.4 1.8 5 1.2 7 C2 9.5 5 11.5 8.5 11.5" fill="none" stroke="#a9b5c2" stroke-width="2"/><path d="M4.8 7.5 C4.6 5.5 6.5 4.2 8.2 4.6 C7 5.4 6.8 6.5 7.4 7.6 Z" fill="#a9b5c2"/><path d="M9.2 10 L15.5 10 L12.3 13.6Z" fill="#a9b5c2" stroke="#383a3f" stroke-width="0.8"/></svg>
<div class="a" style="left:832px;top:638px;width:32px;height:1px;background:#36383d"></div>
<div class="a" style="left:832px;top:641px;width:32px;height:1px;background:#36383d"></div>
<svg class="a" style="left:314px;top:649px" width="18" height="15"><rect x="0.75" y="0.75" width="16" height="13" fill="none" stroke="#e8ecef" stroke-width="1.5"/><path d="M4 4.5 L7 7 L4 9.5" stroke="#e8ecef" stroke-width="1.2" fill="none"/><path d="M9 10.5 L12 10.5" stroke="#e8ecef" stroke-width="1.2"/></svg>
<div class="t" style="left:336px;top:647px;color:#e6eaee">Console</div>
<div class="a" style="left:304px;top:673px;width:86px;height:2px;background:#f26b2b"></div>
<svg class="a" style="left:407px;top:649px" width="19" height="14" fill="none" stroke="#8e9298"><path d="M1.5 12.5 C1.8 7 6 4.2 9.4 4.2 C12.8 4.2 17 7 17.3 12.5" stroke-width="1.2"/><path d="M2.4 4 L16.4 4" stroke-width="0.8"/><circle cx="2.4" cy="4" r="1.3" fill="#8e9298"/><circle cx="16.4" cy="4" r="1.3" fill="#8e9298"/><circle cx="9.4" cy="4" r="1.6" fill="#202428" stroke-width="1.1"/></svg>
<div class="t" style="left:430px;top:647px">Curve Editor</div>
<svg class="a" style="left:528px;top:648px" width="17" height="15"><rect x="0.5" y="0.5" width="16" height="14" fill="none" stroke="#9ba1a8" stroke-width="1"/><path d="M8.5 4 L8.5 9 M8.5 10.5 L8.5 12" stroke="#9ba1a8" stroke-width="1.2"/></svg>
<div class="t" style="left:550px;top:647px">Build Errors</div>
<svg class="a" style="left:646px;top:649px" width="13" height="13"><circle cx="5" cy="5" r="3.6" fill="none" stroke="#9ba1a8" stroke-width="1.4"/><path d="M7.5 7.5 L12 12" stroke="#9ba1a8" stroke-width="1.8"/></svg>
<div class="t" style="left:666px;top:647px">Search Results</div>
<div class="a" style="left:304px;top:675px;width:1089px;height:58px;background:#2e2f34"></div>
<div class="a" style="left:304px;top:733px;width:1089px;height:285px;background:#2a2b2f"></div>
<div class="a" style="left:320px;top:691px;width:73px;height:26px;background:#3a3c41;border-radius:2px"></div>
<div class="t" style="left:330px;top:696px">Filter</div>
<svg class="a" style="left:372px;top:700px" width="11" height="8"><path d="M0 0 L10 0 L5 6Z" fill="#a6adb4"/></svg>
<div class="a" style="left:409px;top:691px;width:835px;height:26px;background:#29292e;border:1px solid #3a3c41;border-radius:2px"></div>
<div class="t" style="left:418px;top:696px;color:#7f858c">Search</div>
<div class="a" style="left:1260px;top:691px;width:26px;height:26px;background:#3a3c41;border-radius:2px"></div>
<svg class="a" style="left:1267px;top:698px" width="12" height="12"><path d="M8 1 L3.5 6 L8 11" stroke="#c3c9cf" stroke-width="1.6" fill="none"/></svg>
<div class="a" style="left:1290px;top:691px;width:26px;height:26px;background:#3a3c41;border-radius:2px"></div>
<svg class="a" style="left:1297px;top:698px" width="12" height="12"><path d="M4 1 L8.5 6 L4 11" stroke="#c3c9cf" stroke-width="1.6" fill="none"/></svg>
<div class="a" style="left:1328px;top:691px;width:49px;height:26px;background:#3a3c41;border-radius:2px"></div>
<div class="t" style="left:1338px;top:696px">Clear</div>
<div class="a" style="left:1410px;top:27px;width:481px;height:352px;background:#2d2e33"></div>
<div class="a" style="left:1410px;top:381px;width:481px;height:637px;background:#2d2e33"></div>
<div class="t" style="left:1425px;top:39px">Outline</div>
<svg class="a" style="left:1422px;top:81px" width="10" height="8"><path d="M0 0 L9 0 L4.5 7Z" fill="#a6adb4"/></svg>
<svg class="a" style="left:1437px;top:77px" width="14" height="14"><path d="M7 0.5 L13 3.5 L13 10.5 L7 13.5 L1 10.5 L1 3.5Z" fill="#8c8f94"/><path d="M1.2 3.6 L7 6.6 L12.8 3.6 M7 6.6 L7 13.3" stroke="#5d6065" stroke-width="0.9" fill="none"/></svg>
<div class="t" style="left:1457px;top:76px">Game Object</div>
<div class="a" style="left:1411px;top:96px;width:480px;height:23px;background:#3a3c42"></div>
<div class="a" style="left:1411px;top:96px;width:2px;height:23px;background:#f26b2b"></div>
<svg class="a" style="left:1450px;top:102px" width="15" height="10"><rect x="0.3" y="1" width="10.5" height="8" fill="#a9b6c4"/><path d="M10.5 4 L14.5 1.5 L14.5 8.5 L10.5 6Z" fill="#a9b6c4"/></svg>
<div class="t" style="left:1470px;top:99px;color:#e6eaee">camera</div>
<svg class="a" style="left:1450px;top:124px" width="14" height="13"><path d="M7 0.3 L7 12 L1 8.3Z" fill="#838486"/><path d="M7 0.3 L13 8.3 L7 12Z" fill="#949597"/></svg>
<div class="t" style="left:1470px;top:122px">model</div>
<div class="t" style="left:1425px;top:393px">Properties</div>
<div class="t" style="left:1425px;top:435px">Id</div>
<div class="a" style="left:1588px;top:430px;width:293px;height:27px;background:#28292d;border:1px solid #3d3f44"></div>
<div class="t" style="left:1597px;top:435px;color:#e6eaee">camera</div>
<div class="t" style="left:1425px;top:468px">URL</div>
<div class="a" style="left:1588px;top:463px;width:293px;height:27px;background:#28292d;border:1px solid #3d3f44"></div>
<div class="t" style="left:1597px;top:468px;color:#7f858c">#camera</div>
<div class="t" style="left:1425px;top:501px">Aspect Ratio</div>
<div class="a" style="left:1588px;top:496px;width:293px;height:27px;background:#28292d;border:1px solid #3d3f44"></div>
<div class="t" style="left:1597px;top:501px;color:#e6eaee">1.0</div>
<div class="t" style="left:1425px;top:534px">FOV</div>
<div class="a" style="left:1588px;top:529px;width:293px;height:27px;background:#28292d;border:1px solid #3d3f44"></div>
<div class="t" style="left:1597px;top:534px;color:#e6eaee">0.7854</div>
<div class="t" style="left:1425px;top:567px">Near Z</div>
<div class="a" style="left:1588px;top:562px;width:293px;height:27px;background:#28292d;border:1px solid #3d3f44"></div>
<div class="t" style="left:1597px;top:567px;color:#e6eaee">0.1</div>
<div class="t" style="left:1425px;top:600px">Far Z</div>
<div class="a" style="left:1588px;top:595px;width:293px;height:27px;background:#28292d;border:1px solid #3d3f44"></div>
<div class="t" style="left:1597px;top:600px;color:#e6eaee">1000.0</div>
<div class="t" style="left:1425px;top:633px">Auto Aspect Ratio</div>
<div class="a" style="left:1588px;top:632px;width:19px;height:19px;background:#28292d;border:1px solid #3d3f44;border-radius:1px"></div>
<div class="t" style="left:1425px;top:666px">Orthographic Projection</div>
<div class="a" style="left:1588px;top:665px;width:19px;height:19px;background:#28292d;border:1px solid #3d3f44;border-radius:1px"></div>
<div class="t" style="left:1425px;top:699px">Orthographic Zoom Mode</div>
<div class="a" style="left:1588px;top:694px;width:293px;height:27px;background:#28292d;border:1px solid #3d3f44"></div>
<div class="t" style="left:1597px;top:699px;color:#7f858c">Fixed</div>
<div class="a" style="left:1857px;top:695px;width:23px;height:25px;background:#2e2f34"></div>
<svg class="a" style="left:1864px;top:705px" width="10" height="6"><path d="M0 0 L9 0 L4.5 5Z" fill="#6d7278"/></svg>
<div class="t" style="left:1425px;top:732px">Orthographic Zoom</div>
<div class="a" style="left:1588px;top:727px;width:293px;height:27px;background:#28292d;border:1px solid #3d3f44"></div>
<div class="t" style="left:1597px;top:732px;color:#7f858c">1.0</div>
</body></html>
